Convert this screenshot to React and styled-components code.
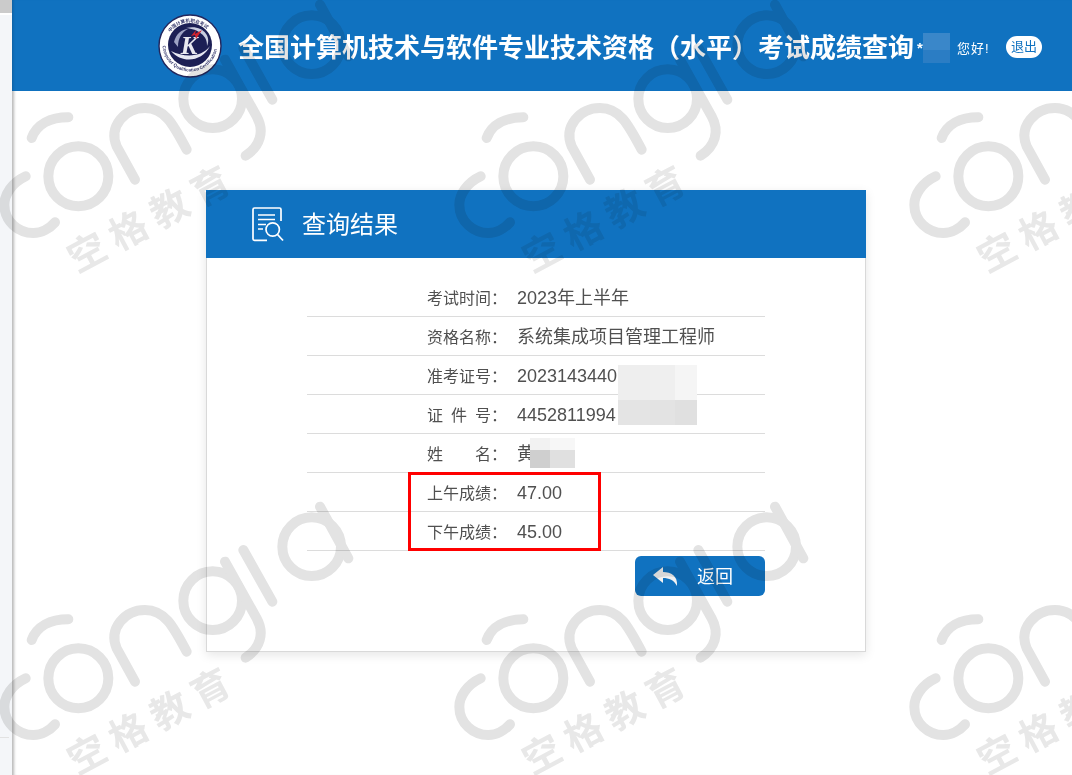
import React from "react";
import styled, { createGlobalStyle } from "styled-components";

const BLUE = "#1072c0";
const CJK = '"Liberation Sans", "Noto Sans CJK SC", sans-serif';

const Global = createGlobalStyle`
  html, body { margin: 0; padding: 0; background: #fff; }
  body { font-family: ${CJK}; }
`;

const Page = styled.div`
  position: relative;
  display: flex;
  width: 1072px;
  height: 775px;
  overflow: hidden;
  background: #fff;
`;

const Strip = styled.aside`
  flex: 0 0 12px;
  display: flex;
  flex-direction: column;
  background: #f4f6f9;
`;
const StripTop = styled.div`
  height: 13px;
  background: #cbcbcb;
  border-bottom: 2px solid #fff;
`;
const StripRule = styled.div`
  margin-top: 722px;
  width: 9px;
  height: 1px;
  background: #e2e2e2;
`;

const Main = styled.main`
  flex: 1;
  min-width: 0;
  box-shadow: inset 4px 0 3px -2px rgba(0, 0, 0, 0.28);
`;

const Header = styled.header`
  display: flex;
  align-items: center;
  height: 91px;
  padding-left: 146px;
  background: ${BLUE};
  color: #fff;
  box-shadow: inset 3px 0 3px -2px rgba(0, 0, 0, 0.18);
`;
const Logo = styled.svg`
  flex: none;
  width: 64px;
  height: 64px;
  margin-right: 16px;
`;
const Title = styled.h1`
  margin: 5px 0 0;
  font: 700 26px/1 ${CJK};
  white-space: nowrap;
`;
const UserBox = styled.div`
  position: relative;
  display: flex;
  align-items: center;
  margin: 3px 0 0 3px;
  font-size: 13px;
`;
const Star = styled.span`
  width: 40px;
  font-size: 15px;
  font-weight: 700;
`;
const Hello = styled.span`
  width: 49px;
  letter-spacing: 1px;
`;
const Logout = styled.button`
  width: 36px;
  height: 22px;
  padding: 0;
  border: 0;
  border-radius: 11px;
  background: #fff;
  color: ${BLUE};
  font: 13px/22px ${CJK};
`;

const Mosaic = styled.div`
  position: absolute;
  z-index: 1;
  left: ${(p) => p.$left}px;
  top: ${(p) => p.$top}px;
  width: ${(p) => p.$w}px;
  height: ${(p) => p.$h}px;
  display: grid;
  grid-template-columns: ${(p) => p.$cols};
  grid-template-rows: ${(p) => p.$rows};
`;
const Tile = styled.i`
  display: block;
  background: ${(p) => p.$c};
`;

const Card = styled.section`
  box-sizing: border-box;
  width: 660px;
  height: 462px;
  margin: 99px 0 0 194px;
  background: #fff;
  border: 1px solid #d9d9d9;
  border-top: 0;
  box-shadow: 0 3px 10px rgba(0, 0, 0, 0.1);
`;
const CardHead = styled.div`
  display: flex;
  align-items: center;
  height: 68px;
  margin: 0 -1px;
  padding-left: 46px;
  background: ${BLUE};
  color: #fff;
`;
const DocIcon = styled.svg`
  flex: none;
  width: 32px;
  height: 35px;
  margin-right: 18px;
`;
const CardTitle = styled.h2`
  margin: 2px 0 0;
  font: 400 24px/1 ${CJK};
`;
const Table = styled.div`
  width: 458px;
  margin: 20px 0 0 100px;
`;
const Row = styled.div`
  box-sizing: border-box;
  display: flex;
  height: 39px;
  border-bottom: 1px solid #dcdcdc;
  color: #505050;
`;
const Label = styled.div`
  display: flex;
  align-items: center;
  width: 210px;
  padding-left: 120px;
  box-sizing: border-box;
  font-size: 16px;
`;
const LabelChars = styled.span`
  display: flex;
  justify-content: space-between;
  width: 64px;
`;
const Value = styled.div`
  position: relative;
  flex: 1;
  font-size: 18px;
  line-height: 40px;
`;
const Scores = styled.div`
  position: relative;
`;
const RedBox = styled.div`
  position: absolute;
  left: 101px;
  top: -1px;
  box-sizing: border-box;
  width: 193px;
  height: 79px;
  border: 3px solid #f00;
`;
const Actions = styled.div`
  display: flex;
  justify-content: flex-end;
  margin-top: 5px;
`;
const BackButton = styled.button`
  display: flex;
  align-items: center;
  box-sizing: border-box;
  width: 130px;
  height: 40px;
  padding: 1px 0 0 18px;
  border: 0;
  border-radius: 6px;
  background: ${BLUE};
  color: #fff;
  font: 18px/1 ${CJK};
`;
const BackIcon = styled.svg`
  width: 25px;
  height: 20px;
  margin-right: 19px;
`;

const WatermarkLayer = styled.svg`
  position: absolute;
  inset: 0;
  width: 1072px;
  height: 775px;
  pointer-events: none;
  mix-blend-mode: multiply;
`;
const MarkText = styled.text`
  font-family: "Noto Sans CJK SC", sans-serif;
  font-weight: 700;
  font-size: 114px;
  letter-spacing: 26px;
  fill: #e8e8e8;
`;

function Mark({ x, y }) {
  return (
    <g transform={`translate(${x} ${y}) scale(${1 / 3})`}>
      <g fill="none" stroke="#e3e3e3" strokeWidth="30" strokeLinecap="round">
        <path d="M92 565 C 50 585 28 620 28 650 C 28 700 70 735 115 735 C 140 735 165 720 180 703" />
        <circle cx="250" cy="565" r="90" />
        <path d="M110 450 C 125 410 165 388 220 388" />
        <path d="M420 575 L 365 475 C 340 415 390 360 450 360 C 510 360 535 410 575 485" />
        <circle cx="653" cy="332" r="88" />
        <path d="M752 503 C 795 475 810 430 785 385 L 690 215" />
        <path d="M832 335 L 745 180" />
        <circle cx="950" cy="170" r="88" />
        <path d="M975 50 L 1060 205" />
      </g>
      <MarkText x="472" y="738" textAnchor="middle" transform="rotate(-28 455 690)">
        空格教育
      </MarkText>
    </g>
  );
}

const marks = [];
for (const y of [-12, 490]) for (const x of [-5, 450, 905]) marks.push({ x, y });

const infoRows = [
  { label: ["考", "试", "时", "间"], value: "2023年上半年" },
  { label: ["资", "格", "名", "称"], value: "系统集成项目管理工程师" },
  {
    label: ["准", "考", "证", "号"],
    value: "2023143440",
    mosaic: { left: 101, top: 9, w: 79, h: 60, cols: "32px 25px 22px", rows: "35px 25px", cells: ["#eeeeee", "#efefef", "#f5f5f5", "#e4e4e4", "#e3e3e3", "#e0e0e0"] },
  },
  { label: ["证", "件", "号"], value: "4452811994" },
  {
    label: ["姓", "名"],
    value: "黄",
    mosaic: { left: 13, top: 4, w: 45, h: 30, cols: "20px 25px", rows: "12px 18px", cells: ["#f2f2f2", "#f7f7f7", "#cfcfcf", "#e0e0e0"] },
  },
];
const scoreRows = [
  { label: ["上", "午", "成", "绩"], value: "47.00" },
  { label: ["下", "午", "成", "绩"], value: "45.00" },
];

function Patch({ m }) {
  return (
    <Mosaic $left={m.left} $top={m.top} $w={m.w} $h={m.h} $cols={m.cols} $rows={m.rows}>
      {m.cells.map((c, i) => (
        <Tile key={i} $c={c} />
      ))}
    </Mosaic>
  );
}

function InfoRow({ row }) {
  return (
    <Row>
      <Label>
        <LabelChars>
          {row.label.map((c) => (
            <span key={c}>{c}</span>
          ))}
        </LabelChars>
        ：
      </Label>
      <Value>
        {row.value}
        {row.mosaic && <Patch m={row.mosaic} />}
      </Value>
    </Row>
  );
}

export default function App() {
  return (
    <Page>
      <Global />
      <Strip>
        <StripTop />
        <StripRule />
      </Strip>
      <Main>
        <Header>
          <Logo viewBox="0 0 64 64">
            <defs>
              <path id="ringBottom" d="M4.5 30 A27.5 27.5 0 0 0 59.5 30" />
              <path id="ringTop" d="M10 22 A24.5 24.5 0 0 1 54 22" />
            </defs>
            <circle cx="32" cy="32" r="31" fill="#fff" stroke="#23265c" strokeWidth="1.4" />
            <circle cx="32" cy="31" r="22" fill="#1c1f55" />
            <text fontSize="4.6" fill="#3a3d70" fontFamily="Liberation Sans" fontWeight="700">
              <textPath href="#ringBottom" startOffset="2%">Computer Qualification Certification</textPath>
            </text>
            <text fontSize="4.6" fill="#3a3d70" fontFamily="Noto Sans CJK SC" fontWeight="700">
              <textPath href="#ringTop" startOffset="8%">中国计算机职业考试</textPath>
            </text>
            <path d="M13 37 C 24 50 44 48 52 32 C 44 43 27 44 13 37 Z" fill="#e6e8f2" />
            <path d="M28 14 C 44 10 54 22 49 32 C 50 22 40 15 28 14 Z" fill="#c9cde0" />
            <path d="M16 28 C 18 20 24 15 30 15 C 24 18 20 24 20 33 Z" fill="#9ea3c4" />
            <text x="31" y="40" fontSize="25" fontFamily="Liberation Serif" fontWeight="700" fontStyle="italic" fill="#e8e9f0" textAnchor="middle">K</text>
            <path d="M33 22 L38 16 L37 20 L44 16 L38 25 L37 21 Z" fill="#d3232e" />
          </Logo>
          <Title>全国计算机技术与软件专业技术资格（水平）考试成绩查询</Title>
          <UserBox>
            <Star>*</Star>
            <Mosaic $left={6} $top={-3} $w={27} $h={30} $cols="27px" $rows="17px 13px">
              <Tile $c="#3a87c9" />
              <Tile $c="#2b7dc4" />
            </Mosaic>
            <Hello>您好!</Hello>
            <Logout>退出</Logout>
          </UserBox>
        </Header>
        <Card>
          <CardHead>
            <DocIcon viewBox="0 0 32 35" fill="none" stroke="#fff">
              <path d="M15 33.3 H2.5 Q1 33.3 1 32 V2.5 Q1 1 2.5 1 H27.5 Q29 1 29 2.5 V14" strokeWidth="1.7" />
              <path d="M6 8 H23 M6 12.5 H23 M6 17.5 H14 M6 22 H11" strokeWidth="1.4" />
              <circle cx="20.7" cy="22.5" r="6.7" strokeWidth="1.7" />
              <path d="M25.5 27.5 L31 33.5" strokeWidth="1.8" />
            </DocIcon>
            <CardTitle>查询结果</CardTitle>
          </CardHead>
          <Table>
            {infoRows.map((r) => (
              <InfoRow key={r.value} row={r} />
            ))}
            <Scores>
              {scoreRows.map((r) => (
                <InfoRow key={r.value} row={r} />
              ))}
              <RedBox />
            </Scores>
            <Actions>
              <BackButton>
                <BackIcon viewBox="0 0 25 20">
                  <path d="M0 8 L10 0 V5 C18 5 25 9 24 19 C21 13 16 11 10 11 V16 Z" fill="#f2f2f2" />
                </BackIcon>
                返回
              </BackButton>
            </Actions>
          </Table>
        </Card>
      </Main>
      <WatermarkLayer viewBox="0 0 1072 775">
        {marks.map((m) => (
          <Mark key={`${m.x}-${m.y}`} x={m.x} y={m.y} />
        ))}
      </WatermarkLayer>
    </Page>
  );
}
